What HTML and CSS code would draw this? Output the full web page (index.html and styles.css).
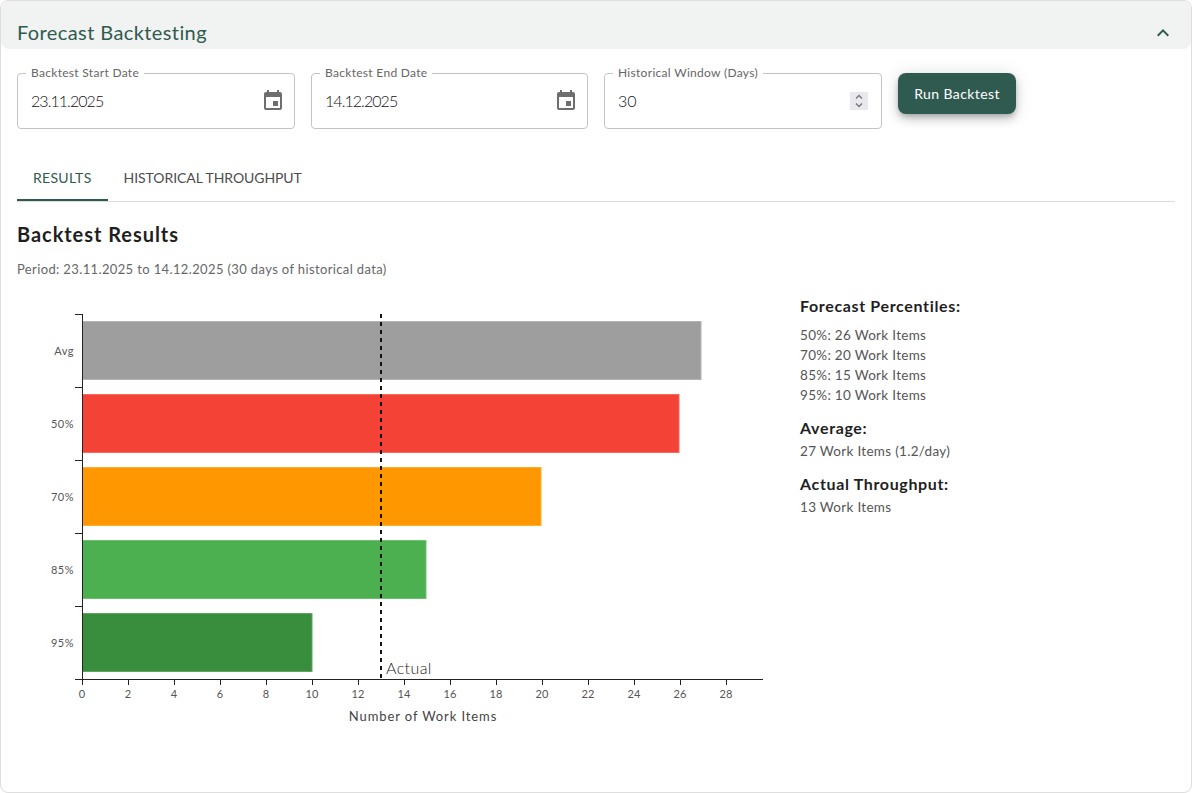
FILE: index.html
```html
<!DOCTYPE html>
<html lang="en">
<head>
<meta charset="utf-8">
<title>Forecast Backtesting</title>
<link rel="stylesheet" href="styles.css">
</head>
<body>
<section class="card">
  <header class="card-head">
    <h2 class="card-title">Forecast Backtesting</h2>
    <svg class="chev" viewBox="0 0 24 24" width="24" height="24"><path d="M7.41 15.41 12 10.83l4.59 4.58L18 14l-6-6-6 6z"/></svg>
  </header>
  <div class="card-body">
    <div class="controls">
      <fieldset class="field">
        <legend class="field-label">Backtest Start Date</legend>
        <span class="field-value field-date">23.11.2025</span>
        <svg class="cal" viewBox="0 0 24 24" width="24" height="24"><path d="M17 12h-5v5h5v-5zM16 1v2H8V1H6v2H5c-1.11 0-1.99.9-1.99 2L3 19c0 1.1.89 2 2 2h14c1.1 0 2-.9 2-2V5c0-1.1-.9-2-2-2h-1V1h-2zm3 18H5V8h14v11z"/></svg>
      </fieldset>
      <fieldset class="field">
        <legend class="field-label">Backtest End Date</legend>
        <span class="field-value field-date">14.12.2025</span>
        <svg class="cal" viewBox="0 0 24 24" width="24" height="24"><path d="M17 12h-5v5h5v-5zM16 1v2H8V1H6v2H5c-1.11 0-1.99.9-1.99 2L3 19c0 1.1.89 2 2 2h14c1.1 0 2-.9 2-2V5c0-1.1-.9-2-2-2h-1V1h-2zm3 18H5V8h14v11z"/></svg>
      </fieldset>
      <fieldset class="field">
        <legend class="field-label">Historical Window (Days)</legend>
        <span class="field-value">30</span>
        <span class="spin"><svg viewBox="0 0 14 18" width="14" height="18"><path d="M4 6.5 7 3.5l3 3M4 11.5l3 3 3-3" fill="none" stroke="#75757f" stroke-width="1.3"/></svg></span>
      </fieldset>
      <button class="run" type="button">Run Backtest</button>
    </div>
    <nav class="tabs">
      <span class="tab tab-active">RESULTS</span>
      <span class="tab">HISTORICAL THROUGHPUT</span>
    </nav>
    <h3 class="res-title">Backtest Results</h3>
    <p class="period">Period: 23.11.2025 to 14.12.2025 (30 days of historical data)</p>
    <div class="results">
      <svg class="chart" width="765" height="440" viewBox="0 0 765 440">
        <g transform="translate(-17,-290)">
          <rect x="82.5" y="321.5" width="618.5" height="58" fill="#9e9e9e" stroke="#b4b4b4"/>
          <rect x="82.5" y="394.5" width="596.5" height="58" fill="#f44336" stroke="#f66a5f"/>
          <rect x="82.5" y="467.5" width="458.5" height="58" fill="#ff9800" stroke="#ffad33"/>
          <rect x="82.5" y="540.5" width="343.5" height="58" fill="#4caf50" stroke="#70bf73"/>
          <rect x="82.5" y="613.5" width="229.5" height="58" fill="#388e3c" stroke="#60a563"/>
          <g class="axis">
            <path d="M82.5 314V680M75 314.5h7M75 387.5h7M75 460.5h7M75 533.5h7M75 606.5h7M75 679.5h688"/>
            <path d="M82.5 680v5M128.5 680v5M174.5 680v5M220.5 680v5M266.5 680v5M312.5 680v5M358.5 680v5M404.5 680v5M450.5 680v5M496.5 680v5M542.5 680v5M588.5 680v5M634.5 680v5M680.5 680v5M726.5 680v5"/>
          </g>
          <path d="M381 314V680" stroke="#111" stroke-width="2" stroke-dasharray="4 4" fill="none"/>
          <g class="tick-y">
            <text x="74" y="355">Avg</text>
            <text x="74" y="428">50%</text>
            <text x="74" y="501">70%</text>
            <text x="74" y="574">85%</text>
            <text x="74" y="647">95%</text>
          </g>
          <g class="tick-x">
            <text x="82" y="698">0</text><text x="128" y="698">2</text><text x="174" y="698">4</text><text x="220" y="698">6</text><text x="266" y="698">8</text><text x="312" y="698">10</text><text x="358" y="698">12</text><text x="404" y="698">14</text><text x="450" y="698">16</text><text x="496" y="698">18</text><text x="542" y="698">20</text><text x="588" y="698">22</text><text x="634" y="698">24</text><text x="680" y="698">26</text><text x="726" y="698">28</text>
          </g>
          <text class="actual" x="386" y="674">Actual</text>
          <text class="x-title" x="423" y="721">Number of Work Items</text>
        </g>
      </svg>
      <aside class="stats">
        <h4 class="stat-head stat-first">Forecast Percentiles:</h4>
        <p class="stat">50%: 26 Work Items</p>
        <p class="stat">70%: 20 Work Items</p>
        <p class="stat">85%: 15 Work Items</p>
        <p class="stat">95%: 10 Work Items</p>
        <h4 class="stat-head">Average:</h4>
        <p class="stat">27 Work Items (1.2/day)</p>
        <h4 class="stat-head">Actual Throughput:</h4>
        <p class="stat">13 Work Items</p>
      </aside>
    </div>
  </div>
</section>
</body>
</html>
```
FILE: styles.css
```css
* { box-sizing: border-box; }
html, body { margin: 0; height: 100%; }
body { font-family: "Lato", "Noto Sans", sans-serif; background: #fff; color: #1f1f1f; overflow: hidden; }
.card { height: 793px; border: 1px solid #dedede; border-radius: 8px; overflow: hidden; background: #fff; }
.card-head { height: 48px; background: #f1f3f2; border-radius: 0 0 8px 8px; display: flex; align-items: flex-end; justify-content: space-between; padding: 0 16px 3px 16px; }
.card-title { margin: 0; font-size: 20px; line-height: 28px; font-weight: 400; color: #2f5a4f; letter-spacing: .4px; }
.chev { fill: #2f5a4f; margin: 0 0 1px 0; }
.card-body { padding: 24px 16px 0; }
.controls { display: flex; gap: 16px; align-items: flex-start; }
.field { position: relative; width: 278px; height: 56px; margin: 0; padding: 0 13px; border: 1px solid #c4c4c4; border-radius: 4px; display: flex; align-items: center; justify-content: space-between; }
.field:nth-child(2) { width: 277px; }
.field-label { position: absolute; top: -8px; left: 8px; padding: 0 5px; background: #fff; font-size: 12px; line-height: 14px; color: #666; letter-spacing: .3px; white-space: nowrap; }
.field-value { font-size: 16px; line-height: 20px; font-weight: 300; color: #111; letter-spacing: 0; }
.field-date { letter-spacing: -.95px; }
.cal { fill: #6e6e6e; margin-right: -4px; }
.spin { width: 18px; height: 18px; background: #e9e9ed; display: flex; justify-content: center; }
.run { width: 118px; height: 41px; border: 0; border-radius: 8px; background: #2f5a4f; color: #fff; font: 400 14px "Lato", sans-serif; letter-spacing: .4px; box-shadow: 0 3px 5px -1px rgba(0,0,0,.2), 0 6px 10px rgba(0,0,0,.14), 0 1px 18px rgba(0,0,0,.12); }
.tabs { display: flex; margin-top: 24px; height: 49px; border-bottom: 1px solid #dcdcdc; }
.tab { height: 48px; padding: 0 16px; display: flex; align-items: center; font-size: 14px; color: #4c4c4c; letter-spacing: -.07px; }
.tab-active { color: #2f5a4f; border-bottom: 2px solid #2f5a4f; padding-top: 2px; letter-spacing: .3px; }
.res-title { margin: 18px 0 0; font-size: 20px; line-height: 28px; font-weight: 700; letter-spacing: .95px; color: #1f1f1f; }
.period { margin: 11px 0 0; font-size: 13px; line-height: 20px; color: #666; letter-spacing: .37px; }
.results { display: flex; margin-top: 11px; }
.chart { display: block; flex: none; }
.axis path { fill: none; stroke: #222; stroke-width: 1; }
.tick-y text { font-size: 11px; fill: #555; text-anchor: end; letter-spacing: .5px; }
.tick-x text { font-size: 11px; fill: #555; text-anchor: middle; letter-spacing: .2px; }
.actual { font-size: 16px; font-weight: 300; fill: #222; letter-spacing: .4px; }
.x-title { font-size: 13px; fill: #444; text-anchor: middle; letter-spacing: .9px; }
.stats { margin-left: 18px; padding-top: 4px; }
.stat-head { margin: 11px 0 1px; font-size: 16px; line-height: 24px; font-weight: 700; color: #1f1f1f; letter-spacing: .65px; }
.stat-head.stat-first { margin-top: 0; margin-bottom: 7px; }
.stat { margin: 0; font-size: 13.5px; line-height: 20px; color: #555; letter-spacing: .3px; }
```
